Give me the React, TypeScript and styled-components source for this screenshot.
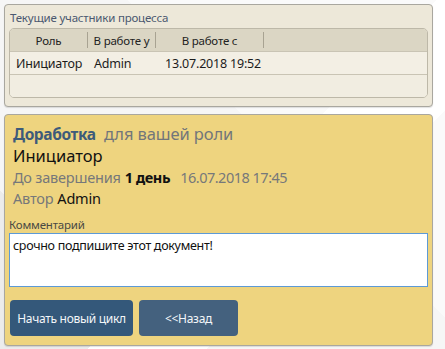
import styled, { createGlobalStyle } from 'styled-components';

const GlobalStyle = createGlobalStyle`
  html, body {
    margin: 0;
    padding: 0;
  }
  body {
    font-family: 'Noto Sans', 'Open Sans', sans-serif;
    background-color: #f6f6f6;
    background-image:
      linear-gradient(135deg, transparent 55%, #ffffff 55%, #ffffff 70%, transparent 70%),
      linear-gradient(45deg, #ececec 20%, transparent 20%, transparent 60%, #fafafa 60%);
    height: 349px;
    overflow: hidden;
  }
`;

const Page = styled.div`
  display: flex;
  flex-direction: column;
  align-items: flex-start;
  gap: 7px;
  padding: 4px 0 0 4px;
`;

const Panel = styled.section<{ $bg: string }>`
  width: 429px;
  background: ${(p) => p.$bg};
  border: 1px solid #a9a79f;
  border-radius: 4px;
  box-shadow: 0 1px 1px rgba(0, 0, 0, 0.12);
  box-sizing: border-box;
`;

const ParticipantsPanel = styled(Panel)`
  padding: 5px 4px 9px 4px;
  height: 103px;
`;

const Caption = styled.div`
  font-size: 11.5px;
  color: #4b5870;
  line-height: 15px;
  padding-left: 1px;
  letter-spacing: -0.2px;
`;

const Grid = styled.div`
  margin-top: 3px;
  border: 1px solid #bdb8a8;
  border-radius: 5px;
  overflow: hidden;
  background: #f1ede1;
`;

const Row = styled.div<{ $bg: string; $h: number }>`
  display: grid;
  grid-template-columns: 78px 68px 108px 1fr;
  height: ${(p) => p.$h}px;
  background: ${(p) => p.$bg};
  border-bottom: 1px solid #c9c4b4;
  &:last-child {
    border-bottom: none;
  }
`;

const HeadCell = styled.div<{ $divider?: boolean }>`
  display: flex;
  align-items: center;
  justify-content: center;
  font-size: 11.5px;
  color: #222;
  letter-spacing: -0.2px;
  border-right: ${(p) => (p.$divider ? '1px solid #a8a392' : 'none')};
  margin: 3px 0;
`;

const Cell = styled.div<{ $align?: string }>`
  display: flex;
  align-items: center;
  justify-content: ${(p) => p.$align || 'flex-start'};
  padding-left: 6px;
  font-size: 12.5px;
  color: #1c1c1c;
  letter-spacing: -0.2px;
  white-space: nowrap;
`;

const TaskPanel = styled(Panel)`
  padding: 8px 4px 8px 4px;
  height: 232px;
  display: flex;
  flex-direction: column;
`;

const Info = styled.div`
  padding-left: 4px;
  display: flex;
  flex-direction: column;
`;

const TitleLine = styled.div`
  font-size: 16.5px;
  line-height: 22px;
  color: #72767a;
  letter-spacing: -0.1px;
  white-space: nowrap;
`;

const Strong = styled.span<{ $color?: string; $size?: number }>`
  font-weight: 700;
  color: ${(p) => p.$color || '#111'};
  font-size: ${(p) => (p.$size ? `${p.$size}px` : 'inherit')};
  letter-spacing: -0.4px;
`;

const Role = styled.div`
  font-size: 16.5px;
  line-height: 22px;
  color: #111;
`;

const Line = styled.div`
  font-size: 14.5px;
  line-height: 21px;
  color: #76787a;
  letter-spacing: -0.2px;
  display: flex;
  gap: 4px;
  white-space: nowrap;
`;

const Dark = styled.span`
  color: #111;
`;

const DateText = styled.span`
  margin-left: 6px;
  letter-spacing: -0.5px;
`;

const FieldLabel = styled.div`
  margin-top: 9px;
  font-size: 11.5px;
  line-height: 14px;
  color: #4a4a44;
  letter-spacing: -0.2px;
`;

const Comment = styled.textarea`
  display: block;
  margin-top: 1px;
  height: 54px;
  box-sizing: border-box;
  width: 419px;
  resize: none;
  border: 1px solid #5d9ad6;
  background: #fff;
  padding: 3px 3px;
  font-family: 'Noto Sans', 'Open Sans', sans-serif;
  font-size: 12.5px;
  color: #111;
  letter-spacing: -0.3px;
  outline: none;
`;

const Actions = styled.div`
  margin-top: 13px;
  display: flex;
  gap: 6px;
  padding-left: 1px;
`;

const Button = styled.button<{ $bg: string; $w: number }>`
  width: ${(p) => p.$w}px;
  height: 36px;
  padding: 0;
  background: ${(p) => p.$bg};
  border: none;
  border-radius: 4px;
  color: #f3f6f9;
  font-family: 'Noto Sans', 'Open Sans', sans-serif;
  font-size: 12px;
  letter-spacing: -0.3px;
  white-space: nowrap;
  cursor: pointer;
`;

export default function App() {
  return (
    <>
      <GlobalStyle />
      <Page>
        <ParticipantsPanel $bg="#ede8d9">
          <Caption>Текущие участники процесса</Caption>
          <Grid>
            <Row $bg="#dbd6c4" $h={22}>
              <HeadCell $divider>Роль</HeadCell>
              <HeadCell $divider>В работе у</HeadCell>
              <HeadCell $divider>В работе с</HeadCell>
              <HeadCell />
            </Row>
            <Row $bg="#f3efe4" $h={22}>
              <Cell>Инициатор</Cell>
              <Cell>Admin</Cell>
              <Cell $align="center">13.07.2018 19:52</Cell>
              <Cell />
            </Row>
            <Row $bg="#f1ede1" $h={22}>
              <Cell />
            </Row>
          </Grid>
        </ParticipantsPanel>
        <TaskPanel $bg="#eed47f">
          <Info>
            <TitleLine>
              <Strong $color="#3d5b7a" $size={15.5}>
                Доработка
              </Strong>
              &nbsp; для вашей роли
            </TitleLine>
            <Role>Инициатор</Role>
            <Line>
              До завершения
              <Dark>
                <Strong>1 день</Strong>
              </Dark>
              <DateText>16.07.2018 17:45</DateText>
            </Line>
            <Line>
              Автор <Dark>Admin</Dark>
            </Line>
          </Info>
          <FieldLabel>Комментарий</FieldLabel>
          <Comment defaultValue="срочно подпишите этот документ!" />
          <Actions>
            <Button $bg="#34587a" $w={123}>
              Начать новый цикл
            </Button>
            <Button $bg="#44617e" $w={99}>
              &lt;&lt;Назад
            </Button>
          </Actions>
        </TaskPanel>
      </Page>
    </>
  );
}
